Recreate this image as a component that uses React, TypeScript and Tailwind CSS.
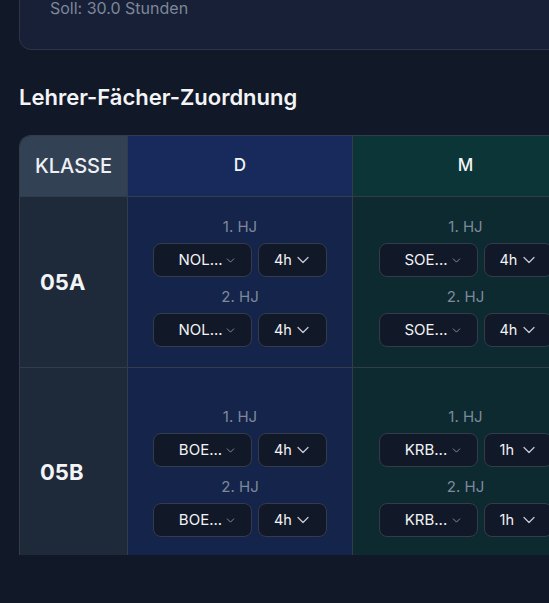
import { ChevronDown } from 'lucide-react';

type Slot = { teacher: string; hours: string };
type Row = { klasse: string; height: string; cells: { d: Slot; m: Slot } };

const rows: Row[] = [
  {
    klasse: '05A',
    height: 'h-[171px]',
    cells: { d: { teacher: 'NOL...', hours: '4h' }, m: { teacher: 'SOE...', hours: '4h' } },
  },
  {
    klasse: '05B',
    height: 'h-[209px]',
    cells: { d: { teacher: 'BOE...', hours: '4h' }, m: { teacher: 'KRB...', hours: '1h' } },
  },
];

const SelectPair = ({ slot }: { slot: Slot }) => (
  <div className="flex gap-[6px]">
    <div className="relative flex h-[34px] w-[99px] items-center justify-center rounded-lg border border-[#343c4b] bg-[#111827] pr-[4px] text-[15px] text-[#f1f3f6]">
      {slot.teacher}
      <ChevronDown className="absolute right-[14px] top-[10px] h-[13px] w-[13px] text-[#9aa3b2]" strokeWidth={1.5} />
    </div>
    <div className="relative flex h-[34px] w-[69px] items-center rounded-lg border border-[#343c4b] bg-[#111827] pl-[15px] text-[14.5px] text-[#f1f3f6]">
      {slot.hours}
      <ChevronDown className="absolute right-[13px] top-[6px] h-[20px] w-[20px] text-[#c3c9d3]" strokeWidth={1.5} />
    </div>
  </div>
);

const SubjectCell = ({ slot, bg, height }: { slot: Slot; bg: string; height: string }) => (
  <div className={`flex ${height} flex-col items-center justify-center border-r border-b border-[#343c4b] ${bg}`}>
    <span className="text-[15px] leading-5 text-[#7f899b]">1. HJ</span>
    <div className="mt-[6px]">
      <SelectPair slot={slot} />
    </div>
    <span className="mt-[10px] text-[15px] leading-5 text-[#7f899b]">2. HJ</span>
    <div className="mt-[6px]">
      <SelectPair slot={slot} />
    </div>
  </div>
);

export default function App() {
  return (
    <div
      className="h-[603px] w-[549px] overflow-hidden bg-[#111827] pl-[19px]"
      style={{ fontFamily: 'Inter, "Noto Sans", sans-serif' }}
    >
      <div className="w-[700px]">
        <div className="-mt-[30px] rounded-xl border border-[#2c3648] bg-[#172036] px-[30px] pt-[25px] pb-[29px]">
          <p className="text-[16px] leading-6 text-[#7d8799]">Soll: 30.0 Stunden</p>
        </div>

        <h2 className="mt-[33px] text-[22px] leading-7 font-semibold text-[#f3f4f6]">Lehrer-Fächer-Zuordnung</h2>

        <div className="mt-[24px] h-[420px] overflow-hidden rounded-tl-xl border-t border-l border-[#343c4b]">
          <div className="grid grid-cols-[108px_225px_226px_141px]">
            <div className="flex h-[61px] items-center border-r border-b border-[#343c4b] bg-[#334155] pl-[15px] text-[20px] font-medium text-[#eef0f3]">
              KLASSE
            </div>
            <div className="flex h-[61px] items-center justify-center border-r border-b border-[#343c4b] bg-[#172a5b] text-[17px] font-medium text-[#f3f4f6]">
              D
            </div>
            <div className="flex h-[61px] items-center justify-center border-r border-b border-[#343c4b] bg-[#0b3536] text-[17px] font-medium text-[#f3f4f6]">
              M
            </div>
            <div className="h-[61px] border-b border-[#343c4b] bg-[#0b3536]" />

            {rows.map((row) => (
              <div key={row.klasse} className="contents">
                <div className={`flex ${row.height} items-center border-r border-b border-[#343c4b] bg-[#1e293a] pl-5 text-[22px] font-bold text-[#f3f4f6]`}>
                  {row.klasse}
                </div>
                <SubjectCell slot={row.cells.d} bg="bg-[#14244a]" height={row.height} />
                <SubjectCell slot={row.cells.m} bg="bg-[#0c2a30]" height={row.height} />
                <div className={`${row.height} border-b border-[#343c4b] bg-[#0c2a30]`} />
              </div>
            ))}
          </div>
        </div>
      </div>
    </div>
  );
}
